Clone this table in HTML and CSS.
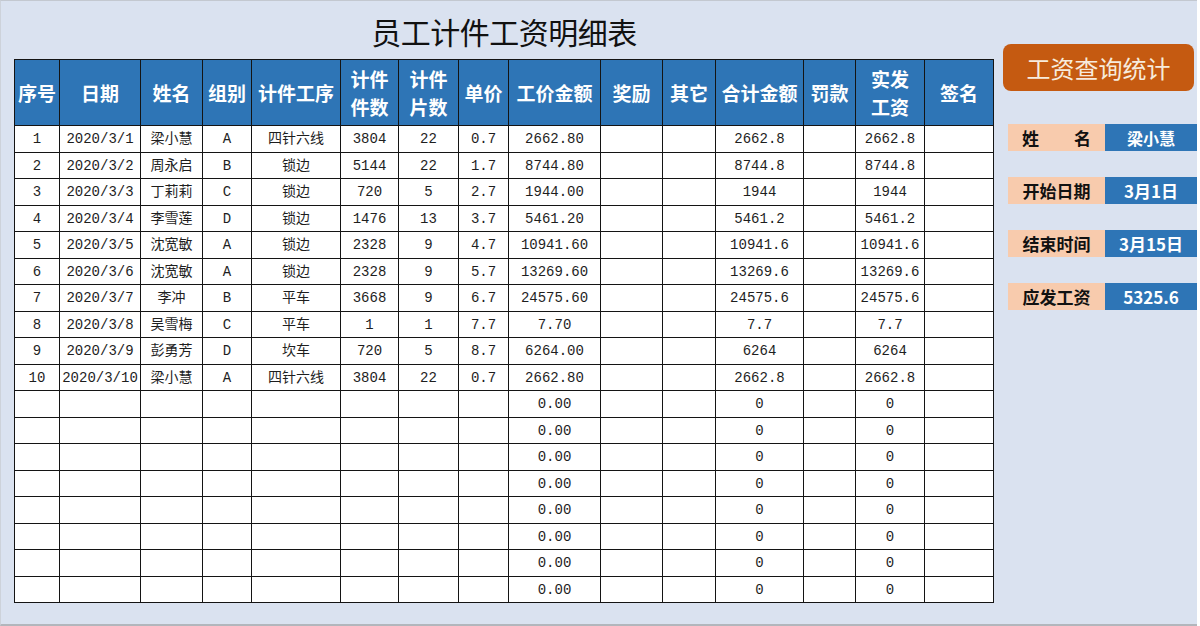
FILE: index.html
```html
<!DOCTYPE html>
<html lang="zh-CN">
<head>
<meta charset="utf-8">
<title>员工计件工资明细表</title>
<link rel="stylesheet" href="styles.css">
</head>
<body>
<div class="page">
  <section class="sheet">
    <h1 class="title">员工计件工资明细表</h1>
    <table class="grid">
      <colgroup>
        <col class="c1"><col class="c2"><col class="c3"><col class="c4"><col class="c5">
        <col class="c6"><col class="c7"><col class="c8"><col class="c9"><col class="c10">
        <col class="c11"><col class="c12"><col class="c13"><col class="c14"><col class="c15">
      </colgroup>
      <thead>
        <tr>
          <th>序号</th><th>日期</th><th>姓名</th><th>组别</th><th>计件工序</th>
          <th>计件<br>件数</th><th>计件<br>片数</th><th>单价</th><th>工价金额</th><th>奖励</th>
          <th>其它</th><th>合计金额</th><th>罚款</th><th>实发<br>工资</th><th>签名</th>
        </tr>
      </thead>
      <tbody>
        <tr><td>1</td><td>2020/3/1</td><td>梁小慧</td><td>A</td><td>四针六线</td><td>3804</td><td>22</td><td>0.7</td><td>2662.80</td><td></td><td></td><td>2662.8</td><td></td><td>2662.8</td><td></td></tr>
        <tr><td>2</td><td>2020/3/2</td><td>周永启</td><td>B</td><td>锁边</td><td>5144</td><td>22</td><td>1.7</td><td>8744.80</td><td></td><td></td><td>8744.8</td><td></td><td>8744.8</td><td></td></tr>
        <tr><td>3</td><td>2020/3/3</td><td>丁莉莉</td><td>C</td><td>锁边</td><td>720</td><td>5</td><td>2.7</td><td>1944.00</td><td></td><td></td><td>1944</td><td></td><td>1944</td><td></td></tr>
        <tr><td>4</td><td>2020/3/4</td><td>李雪莲</td><td>D</td><td>锁边</td><td>1476</td><td>13</td><td>3.7</td><td>5461.20</td><td></td><td></td><td>5461.2</td><td></td><td>5461.2</td><td></td></tr>
        <tr><td>5</td><td>2020/3/5</td><td>沈宽敏</td><td>A</td><td>锁边</td><td>2328</td><td>9</td><td>4.7</td><td>10941.60</td><td></td><td></td><td>10941.6</td><td></td><td>10941.6</td><td></td></tr>
        <tr><td>6</td><td>2020/3/6</td><td>沈宽敏</td><td>A</td><td>锁边</td><td>2328</td><td>9</td><td>5.7</td><td>13269.60</td><td></td><td></td><td>13269.6</td><td></td><td>13269.6</td><td></td></tr>
        <tr><td>7</td><td>2020/3/7</td><td>李冲</td><td>B</td><td>平车</td><td>3668</td><td>9</td><td>6.7</td><td>24575.60</td><td></td><td></td><td>24575.6</td><td></td><td>24575.6</td><td></td></tr>
        <tr><td>8</td><td>2020/3/8</td><td>吴雪梅</td><td>C</td><td>平车</td><td>1</td><td>1</td><td>7.7</td><td>7.70</td><td></td><td></td><td>7.7</td><td></td><td>7.7</td><td></td></tr>
        <tr><td>9</td><td>2020/3/9</td><td>彭勇芳</td><td>D</td><td>坎车</td><td>720</td><td>5</td><td>8.7</td><td>6264.00</td><td></td><td></td><td>6264</td><td></td><td>6264</td><td></td></tr>
        <tr><td>10</td><td>2020/3/10</td><td>梁小慧</td><td>A</td><td>四针六线</td><td>3804</td><td>22</td><td>0.7</td><td>2662.80</td><td></td><td></td><td>2662.8</td><td></td><td>2662.8</td><td></td></tr>
        <tr><td></td><td></td><td></td><td></td><td></td><td></td><td></td><td></td><td>0.00</td><td></td><td></td><td>0</td><td></td><td>0</td><td></td></tr>
        <tr><td></td><td></td><td></td><td></td><td></td><td></td><td></td><td></td><td>0.00</td><td></td><td></td><td>0</td><td></td><td>0</td><td></td></tr>
        <tr><td></td><td></td><td></td><td></td><td></td><td></td><td></td><td></td><td>0.00</td><td></td><td></td><td>0</td><td></td><td>0</td><td></td></tr>
        <tr><td></td><td></td><td></td><td></td><td></td><td></td><td></td><td></td><td>0.00</td><td></td><td></td><td>0</td><td></td><td>0</td><td></td></tr>
        <tr><td></td><td></td><td></td><td></td><td></td><td></td><td></td><td></td><td>0.00</td><td></td><td></td><td>0</td><td></td><td>0</td><td></td></tr>
        <tr><td></td><td></td><td></td><td></td><td></td><td></td><td></td><td></td><td>0.00</td><td></td><td></td><td>0</td><td></td><td>0</td><td></td></tr>
        <tr><td></td><td></td><td></td><td></td><td></td><td></td><td></td><td></td><td>0.00</td><td></td><td></td><td>0</td><td></td><td>0</td><td></td></tr>
        <tr><td></td><td></td><td></td><td></td><td></td><td></td><td></td><td></td><td>0.00</td><td></td><td></td><td>0</td><td></td><td>0</td><td></td></tr>
      </tbody>
    </table>
  </section>
  <aside class="panel">
    <div class="query-btn">工资查询统计</div>
    <div class="info">
      <div class="info-row"><div class="label"><span class="spread"><span>姓</span><span>名</span></span></div><div class="value small">梁小慧</div></div>
      <div class="info-row"><div class="label">开始日期</div><div class="value">3月1日</div></div>
      <div class="info-row"><div class="label">结束时间</div><div class="value">3月15日</div></div>
      <div class="info-row"><div class="label">应发工资</div><div class="value">5325.6</div></div>
    </div>
  </aside>
</div>
</body>
</html>
```

FILE: styles.css
```css
* { box-sizing: border-box; }
html, body { margin: 0; padding: 0; }
body {
  width: 1200px;
  height: 626px;
  overflow: hidden;
  background: #ffffff;
  font-family: "Noto Sans CJK SC", sans-serif;
}
.page {
  width: 1197px;
  height: 626px;
  display: flex;
  background: #dae2f0;
  border-top: 1px solid #c3c8d0;
  border-left: 1px solid #cdd2da;
  border-bottom: 2px solid #b2b6bc;
}

/* left sheet */
.sheet {
  width: 993px;
  padding-left: 13px;
  flex: none;
}
.title {
  margin: 0;
  height: 58px;
  padding-top: 2px;
  display: flex;
  align-items: center;
  justify-content: center;
  font-size: 30px;
  font-weight: 400;
  line-height: 1;
  color: #111;
  letter-spacing: -0.5px;
}
.grid {
  width: 980px;
  table-layout: fixed;
  border-collapse: separate;
  border-spacing: 1px;
  background: #141414;
}
.c1 { width: 44px; }
.c2 { width: 80px; }
.c3 { width: 61px; }
.c4 { width: 48px; }
.c5 { width: 88px; }
.c6 { width: 57px; }
.c7 { width: 59px; }
.c8 { width: 49px; }
.c9 { width: 91px; }
.c10 { width: 61px; }
.c11 { width: 52px; }
.c12 { width: 87px; }
.c13 { width: 51px; }
.c14 { width: 68px; }
.c15 { width: 68px; }

.grid th {
  height: 65px;
  padding: 0;
  background: #2e75b6;
  color: #ffffff;
  font-size: 19px;
  font-weight: 700;
  line-height: 28px;
  text-align: center;
  vertical-align: middle;
  white-space: nowrap;
}
.grid td {
  padding: 0;
  background: #ffffff;
  color: #1e1e1e;
  font-family: "Liberation Mono", "Noto Sans CJK SC", monospace;
  font-size: 14px;
  line-height: 16px;
  text-align: center;
  vertical-align: middle;
  white-space: nowrap;
  overflow: hidden;
}
.grid tbody tr:nth-child(odd) td { height: 26px; }
.grid tbody tr:nth-child(even) td { height: 25px; }

/* right panel */
.panel {
  flex: none;
  width: 194px;
  margin-left: 9px;
  padding-top: 43px;
  display: flex;
  flex-direction: column;
}
.query-btn {
  width: 191px;
  height: 47px;
  border-radius: 8px;
  background: #c55a11;
  color: #f7ebdc;
  font-size: 24px;
  font-weight: 400;
  display: flex;
  align-items: center;
  justify-content: center;
  line-height: 1;
}
.info {
  margin-top: 33px;
  margin-left: 5px;
  display: flex;
  flex-direction: column;
  gap: 26px;
}
.info-row {
  display: flex;
  height: 27px;
}
.label {
  width: 97px;
  background: #f8cbad;
  color: #111;
  font-size: 17px;
  font-weight: 700;
  display: flex;
  align-items: center;
  justify-content: center;
  line-height: 1;
}
.spread {
  width: 69px;
  display: flex;
  justify-content: space-between;
}
.value {
  width: 92px;
  background: #2e75b6;
  color: #ffffff;
  font-size: 17px;
  font-weight: 700;
  display: flex;
  align-items: center;
  justify-content: center;
  line-height: 1;
}
.value.small { font-size: 16px; }
```
